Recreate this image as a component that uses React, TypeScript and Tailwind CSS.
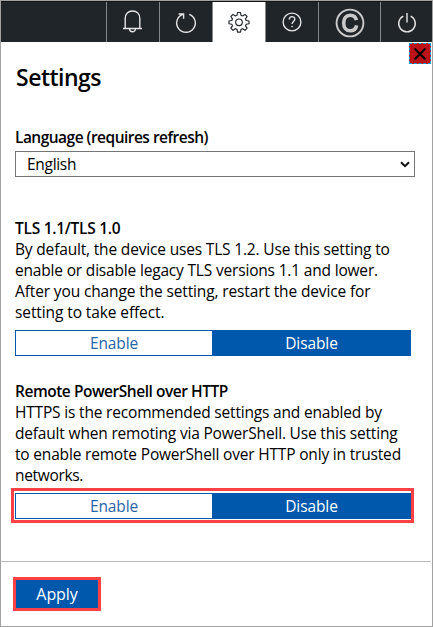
import type { ReactNode } from "react";

function Tab({ children, className }: { children: ReactNode; className: string }) {
  return (
    <button className={`flex h-full shrink-0 items-center justify-center border-l border-[#85888a] ${className}`}>
      {children}
    </button>
  );
}

function Header() {
  return (
    <header className="flex h-[41px] border-t border-[#101417] bg-[#20252a] text-[#e4e4e4]">
      <div className="w-[105px] shrink-0" />
      <Tab className="w-[53px]">
        <svg width="20" height="24" viewBox="0 0 20 24" fill="none" stroke="currentColor" strokeWidth="1.4" className="-mt-0.5">
          <path d="M2.2 19V9.5C2.2 4.8 5.2 2 9.5 2s7.3 2.8 7.3 7.5V19M0 19.5h19M6.6 20c0 3.7 5.8 3.7 5.8 0" />
        </svg>
      </Tab>
      <Tab className="w-[53px]">
        <svg width="22" height="22" viewBox="0 0 22 22" fill="none" stroke="currentColor" strokeWidth="1.4" className="mt-px">
          <path d="M14.3 2.3A9.3 9.3 0 1 1 7.7 2.3M3.6 2h5v4.8" />
        </svg>
      </Tab>
      <Tab className="w-[53px] bg-white text-[#20252a]">
        <svg width="22" height="22" viewBox="0 0 22 22" fill="none" stroke="currentColor" strokeWidth="1.15" strokeLinejoin="round">
          <path d="M9.5 1.5h3l.5 2.8 1.7.7 2.3-1.6 2.1 2.1-1.6 2.3.7 1.7 2.8.5v2.7l-2.8.5-.7 1.7 1.6 2.3-2.1 2.1-2.3-1.6-1.7.7-.5 2.8h-3L9 18.4l-1.7-.7L5 19.3l-2.1-2.1 1.6-2.3-.7-1.7-2.8-.5V10l2.8-.5.7-1.7L2.9 5.5 5 3.4 7.3 5 9 4.3z" />
          <circle cx="11" cy="11.3" r="3.3" />
        </svg>
      </Tab>
      <Tab className="w-[53px]">
        <svg width="20" height="20" viewBox="0 0 20 20" fill="none" stroke="currentColor" strokeWidth="1.4" className="mr-px">
          <circle cx="10" cy="10" r="8.9" />
          <path d="M7.3 7.5c0-3.7 5.5-3.7 5.5-.4 0 2.4-2.7 2.3-2.7 5" />
          <circle cx="10.1" cy="14.5" r=".5" fill="currentColor" strokeWidth=".7" />
        </svg>
      </Tab>
      <Tab className="w-[62px] text-[#c9c9c9]">
        <svg width="30" height="30" viewBox="0 0 30 30" fill="none" stroke="currentColor" className="mt-0.5">
          <circle cx="15" cy="15" r="13.4" strokeWidth="1.9" />
          <path d="M21.4 12.2C20.7 8.8 18.5 7.2 15.2 7.2 11 7.2 8.7 10.3 8.7 15s2.3 7.8 6.5 7.8c3.4 0 5.8-1.9 6.4-5.4" strokeWidth="3.6" />
        </svg>
      </Tab>
      <Tab className="grow">
        <svg width="20" height="22" viewBox="0 0 20 22" fill="none" stroke="currentColor" strokeWidth="1.4" className="mt-px">
          <path d="M6.3 4.1a8.3 8.3 0 1 0 7.4 0M10 1v9.5" />
        </svg>
      </Tab>
    </header>
  );
}

function Toggle() {
  return (
    <div className="flex h-[26px] w-[396px] border border-[#0058ad] text-[15.5px] leading-[24px] tracking-[-0.1px]">
      <button className="w-[196px] bg-white text-[#2864a8]">Enable</button>
      <button className="grow bg-[#0058ad] pl-px text-white">Disable</button>
    </div>
  );
}

export default function App() {
  return (
    <div className="flex h-[627px] w-[433px] flex-col border border-[#a2a2a2] bg-white font-['Open_Sans','Noto_Sans',sans-serif] text-[15.5px] leading-[21px] text-black">
      <Header />
      <main className="relative flex h-[519px] flex-col px-3.5">
        <button className="absolute top-px right-px flex h-[21px] w-[22px] items-center justify-center border border-dashed border-[#159bd0] bg-[#bd1118]" aria-label="Close">
          <svg width="14" height="14" viewBox="0 0 14 14" stroke="black" strokeWidth="2">
            <path d="M1.5 1.5l11 11M12.5 1.5l-11 11" />
          </svg>
        </button>
        <h1 className="mt-[18px] ml-px h-[34px] text-[23px] leading-[34px] font-semibold tracking-[-0.5px]">Settings</h1>
        <label className="mt-[33px] font-semibold tracking-[-0.52px]">Language (requires refresh)</label>
        <div className="mt-[3px] flex h-[26px] w-[400px] shrink-0 items-center justify-between border border-[#767676] pr-1 pl-[11px]">
          <span className="mt-px tracking-[-0.3px]">English</span>
          <svg width="10" height="7" viewBox="0 0 10 7" fill="none" stroke="#111" strokeWidth="2">
            <path d="M1 1.2l4 4 4-4" />
          </svg>
        </div>
        <section className="mt-[41px] whitespace-nowrap">
          <h2 className="font-semibold tracking-[-0.27px]">TLS 1.1/TLS 1.0</h2>
          <p className="mb-[7px]">
            <span className="block tracking-[-0.17px]">By default, the device uses TLS 1.2. Use this setting to</span>
            <span className="block tracking-[-0.18px]">enable or disable legacy TLS versions 1.1 and lower.</span>
            <span className="block tracking-[-0.13px]">After you change the setting, restart the device for</span>
            <span className="block tracking-[-0.1px]">setting to take effect.</span>
          </p>
          <Toggle />
        </section>
        <section className="mt-[25px] whitespace-nowrap">
          <h2 className="font-semibold tracking-[-0.47px]">Remote PowerShell over HTTP</h2>
          <p className="mb-[2px]">
            <span className="block tracking-[-0.18px]">HTTPS is the recommended settings and enabled by</span>
            <span className="block tracking-[-0.18px]">default when remoting via PowerShell. Use this setting</span>
            <span className="block tracking-[-0.18px]">to enable remote PowerShell over HTTP only in trusted</span>
            <span className="block tracking-[-0.33px]">networks.</span>
          </p>
          <div className="-ml-1 h-[35px] w-[403px] border-3 border-[#fb4143] p-px pt-0.5">
            <Toggle />
          </div>
        </section>
      </main>
      <footer className="mr-px grow border-t border-[#b8b8b8] pt-[15px] pl-3">
        <button className="h-[34px] w-[88px] border-3 border-[#fb4143] bg-[#0058ad] text-[16px] leading-[27px] tracking-[-0.1px] text-white">Apply</button>
      </footer>
    </div>
  );
}
